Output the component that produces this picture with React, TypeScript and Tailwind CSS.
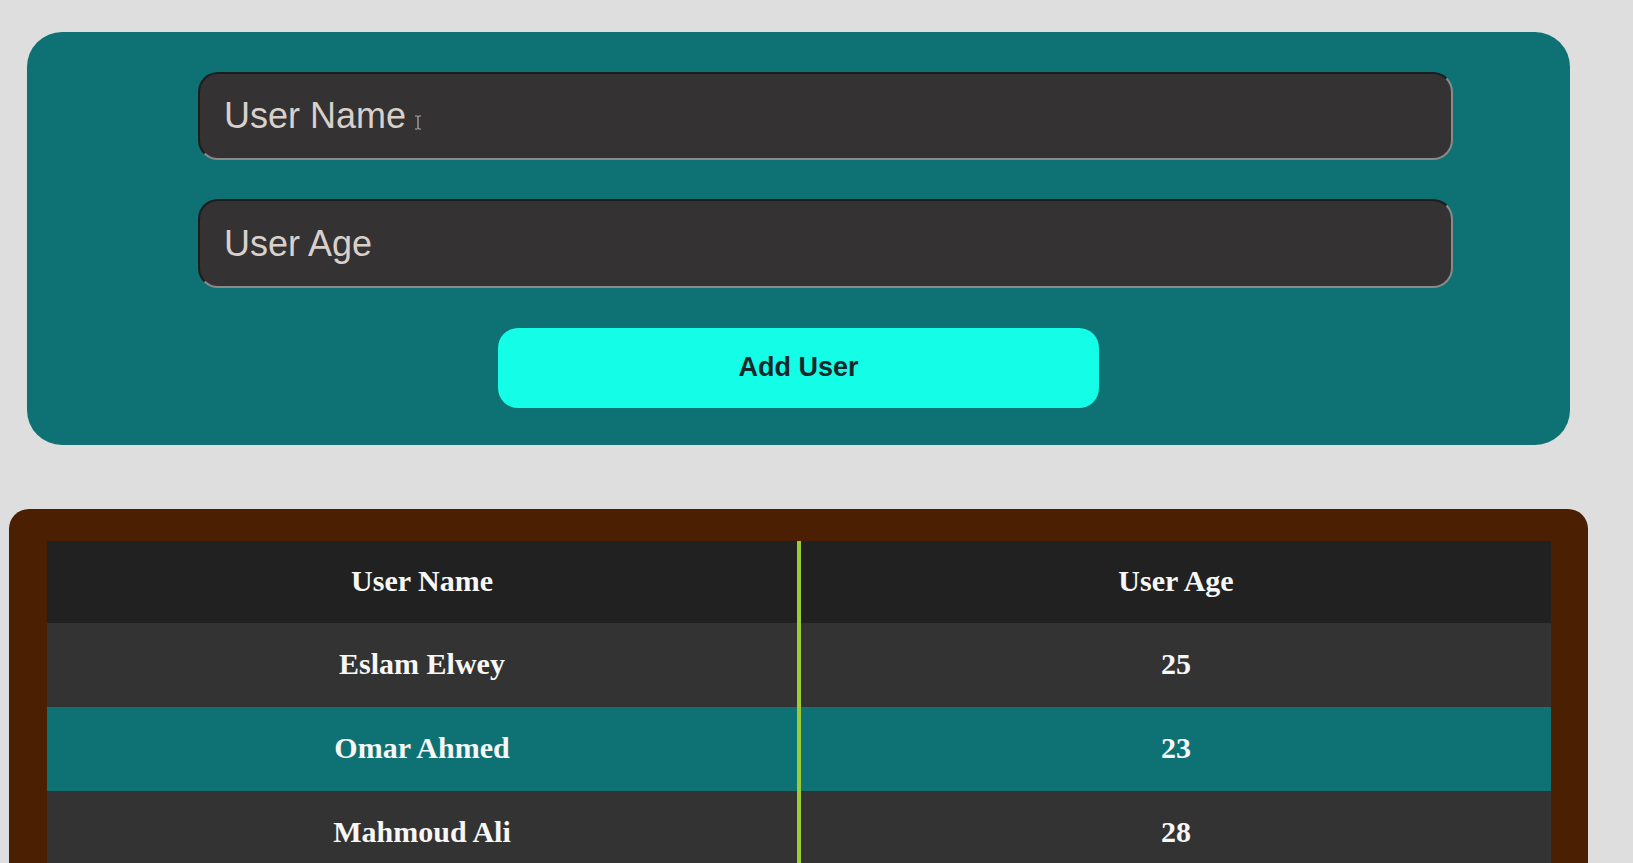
import React, { useState } from 'react';

type User = { name: string; age: number };

const initialUsers: User[] = [
  { name: 'Eslam Elwey', age: 25 },
  { name: 'Omar Ahmed', age: 23 },
  { name: 'Mahmoud Ali', age: 28 },
];

function App() {
  const [users, setUsers] = useState<User[]>(initialUsers);
  const [name, setName] = useState('');
  const [age, setAge] = useState('');

  const addUser = () => {
    if (!name || !age) return;
    setUsers([...users, { name, age: Number(age) }]);
    setName('');
    setAge('');
  };

  return (
    <div className="min-h-screen bg-[#dedede] pt-[32px] pb-10 font-['Liberation_Sans',Arial,sans-serif]">
      {/* Form card */}
      <div className="ml-[27px] w-[1543px] rounded-[35px] bg-[#0e7275] pt-[40px] pb-[37px]">
        <div className="relative ml-[171px] w-[1255px]">
          <input
            value={name}
            onChange={(e) => setName(e.target.value)}
            placeholder="User Name"
            className="h-[88px] w-full rounded-[20px] border-2 border-t-[#1c1c1c] border-l-[#1c1c1c] border-r-[#8a8a8a] border-b-[#8a8a8a] bg-[#343232] pl-[24px] text-[36px] text-[#d9d0cc] outline-none placeholder:text-[#d9d0cc]"
          />
          {/* mouse cursor */}
          <svg className="pointer-events-none absolute left-[216px] top-[43px]" width="8" height="15" viewBox="0 0 8 15">
            <path d="M1 1h2.5M4.5 1H7M4 1v13M1 14h2.5M4.5 14H7" stroke="#b8b0ac" strokeWidth="1.2" fill="none" />
          </svg>
        </div>
        <div className="ml-[171px] mt-[39px] w-[1255px]">
          <input
            value={age}
            onChange={(e) => setAge(e.target.value)}
            placeholder="User Age"
            className="h-[89px] w-full rounded-[20px] border-2 border-t-[#1c1c1c] border-l-[#1c1c1c] border-r-[#8a8a8a] border-b-[#8a8a8a] bg-[#343232] pl-[24px] text-[36px] text-[#d9d0cc] outline-none placeholder:text-[#d9d0cc]"
          />
        </div>
        <button
          onClick={addUser}
          className="mx-auto mt-[40px] block h-[80px] w-[601px] rounded-[20px] bg-[#14fde6] pb-[2px] text-[27px] font-bold text-[#16282a]"
        >
          Add User
        </button>
      </div>

      {/* Users table */}
      <div className="ml-[9px] mt-[64px] w-[1579px] rounded-[20px] bg-[#4b1f02] pt-[32px] pl-[38px] pr-[37px] pb-[32px]">
        <table className="w-full border-collapse font-['Liberation_Serif','Times_New_Roman',serif] text-[30px] font-bold text-[#f7f7f7]">
          <thead>
            <tr className="h-[82px] bg-[#212121]">
              <th className="w-1/2 border-r-4 border-[#9acd32] pb-[4px] font-bold">User Name</th>
              <th className="w-1/2 pb-[4px] font-bold">User Age</th>
            </tr>
          </thead>
          <tbody>
            {users.map((user, i) => (
              <tr key={user.name + i} className={`h-[84px] ${i % 2 === 1 ? 'bg-[#0e7275]' : 'bg-[#333333]'}`}>
                <td className="border-r-4 border-[#9acd32] pb-[3px] text-center">{user.name}</td>
                <td className="pb-[3px] text-center">{user.age}</td>
              </tr>
            ))}
          </tbody>
        </table>
      </div>
    </div>
  );
}

export default App;
